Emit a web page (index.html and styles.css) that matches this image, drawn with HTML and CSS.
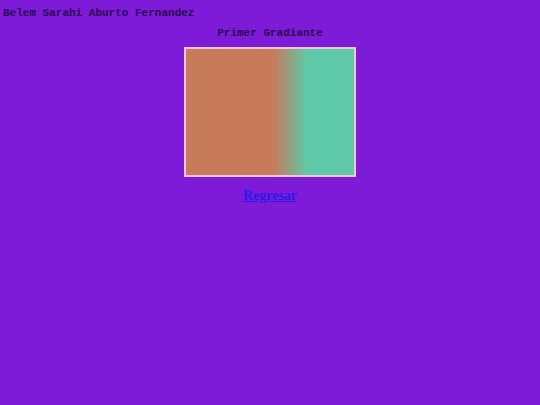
FILE: index.html
```html
<!DOCTYPE html>
<html>
<head>
<meta charset="utf-8">
<link rel="stylesheet" href="styles.css">
</head>
<body>
<div class="author">Belem Sarahi Aburto Fernandez</div>
<div class="title">Primer Gradiante</div>
<div class="box"></div>
<div class="back"><a href="#">Regresar</a></div>
</body>
</html>
```
FILE: styles.css
```css
html, body {
  margin: 0;
  background: #7e1bd9;
}
body {
  padding: 6px 3px;
  font-family: "Liberation Mono", monospace;
  font-weight: bold;
  font-size: 11px;
  color: #2a0850;
}
.author {
  line-height: 14px;
}
.title {
  text-align: center;
  margin-top: 6px;
  line-height: 14px;
}
.box {
  width: 168px;
  height: 126px;
  margin: 7px auto 0;
  border: 2px solid #f2c6d6;
  background: linear-gradient(to right, #c77b5a 52%, #5ec9a8 72%);
}
.back {
  text-align: center;
  margin-top: 11px;
  font-family: "Liberation Serif", serif;
  font-weight: bold;
  font-size: 14px;
}
.back a {
  color: #2a1ae6;
}
```
